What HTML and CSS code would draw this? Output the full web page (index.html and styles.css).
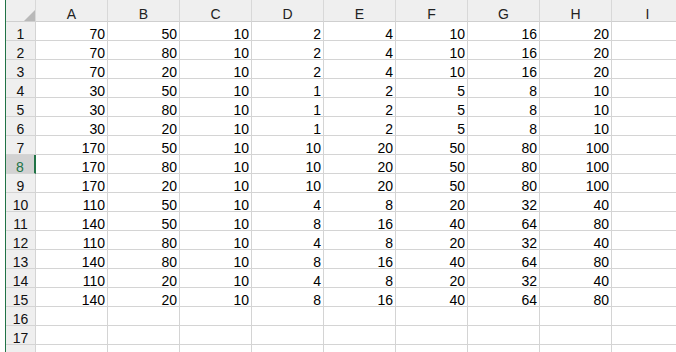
FILE: index.html
```html
<!DOCTYPE html>
<html>
<head>
<meta charset="utf-8">
<link rel="stylesheet" href="styles.css">
</head>
<body>
<div class="frame">
<table class="grid">
<thead>
<tr>
<th class="corner"><svg class="tri" width="11" height="11" viewBox="0 0 11 11"><polygon points="11,0 11,11 0,11" fill="#b9b9b9"/></svg></th>
<th class="ch">A</th><th class="ch">B</th><th class="ch">C</th><th class="ch">D</th><th class="ch">E</th><th class="ch">F</th><th class="ch">G</th><th class="ch">H</th><th class="ch">I</th>
</tr>
</thead>
<tbody>
<tr><th class="rh">1</th><td>70</td><td>50</td><td>10</td><td>2</td><td>4</td><td>10</td><td>16</td><td>20</td><td></td></tr>
<tr><th class="rh">2</th><td>70</td><td>80</td><td>10</td><td>2</td><td>4</td><td>10</td><td>16</td><td>20</td><td></td></tr>
<tr><th class="rh">3</th><td>70</td><td>20</td><td>10</td><td>2</td><td>4</td><td>10</td><td>16</td><td>20</td><td></td></tr>
<tr><th class="rh">4</th><td>30</td><td>50</td><td>10</td><td>1</td><td>2</td><td>5</td><td>8</td><td>10</td><td></td></tr>
<tr><th class="rh">5</th><td>30</td><td>80</td><td>10</td><td>1</td><td>2</td><td>5</td><td>8</td><td>10</td><td></td></tr>
<tr><th class="rh">6</th><td>30</td><td>20</td><td>10</td><td>1</td><td>2</td><td>5</td><td>8</td><td>10</td><td></td></tr>
<tr><th class="rh">7</th><td>170</td><td>50</td><td>10</td><td>10</td><td>20</td><td>50</td><td>80</td><td>100</td><td></td></tr>
<tr><th class="rh sel">8</th><td>170</td><td>80</td><td>10</td><td>10</td><td>20</td><td>50</td><td>80</td><td>100</td><td></td></tr>
<tr><th class="rh">9</th><td>170</td><td>20</td><td>10</td><td>10</td><td>20</td><td>50</td><td>80</td><td>100</td><td></td></tr>
<tr><th class="rh">10</th><td>110</td><td>50</td><td>10</td><td>4</td><td>8</td><td>20</td><td>32</td><td>40</td><td></td></tr>
<tr><th class="rh">11</th><td>140</td><td>50</td><td>10</td><td>8</td><td>16</td><td>40</td><td>64</td><td>80</td><td></td></tr>
<tr><th class="rh">12</th><td>110</td><td>80</td><td>10</td><td>4</td><td>8</td><td>20</td><td>32</td><td>40</td><td></td></tr>
<tr><th class="rh">13</th><td>140</td><td>80</td><td>10</td><td>8</td><td>16</td><td>40</td><td>64</td><td>80</td><td></td></tr>
<tr><th class="rh">14</th><td>110</td><td>20</td><td>10</td><td>4</td><td>8</td><td>20</td><td>32</td><td>40</td><td></td></tr>
<tr><th class="rh">15</th><td>140</td><td>20</td><td>10</td><td>8</td><td>16</td><td>40</td><td>64</td><td>80</td><td></td></tr>
<tr><th class="rh">16</th><td></td><td></td><td></td><td></td><td></td><td></td><td></td><td></td><td></td></tr>
<tr><th class="rh">17</th><td></td><td></td><td></td><td></td><td></td><td></td><td></td><td></td><td></td></tr>
<tr><th class="rh">18</th><td></td><td></td><td></td><td></td><td></td><td></td><td></td><td></td><td></td></tr>
</tbody>
</table>
</div>
</body>
</html>
```

FILE: styles.css
```css
html, body {
  margin: 0;
  padding: 0;
  background: #ffffff;
  overflow: hidden;
}

body {
  width: 676px;
  height: 352px;
  font-family: "Liberation Sans", Arial, sans-serif;
  color: #000000;
}

.frame {
  margin-left: 5px;
  border-left: 1px solid #217346;
  height: 352px;
  overflow: hidden;
}

.grid {
  border-collapse: separate;
  border-spacing: 0;
  table-layout: fixed;
  width: 678px;
}

.grid th,
.grid td {
  box-sizing: border-box;
  padding: 0;
  margin: 0;
  overflow: hidden;
  white-space: nowrap;
}

.corner,
.ch {
  height: 22px;
  background: #efefef;
  border-right: 1px solid #d8d8d8;
  border-bottom: 1px solid #cfcfcf;
  font-weight: normal;
}

.corner {
  width: 30px;
  text-align: right;
  vertical-align: bottom;
  padding: 0 2px 2px 0;
  line-height: 0;
}

.tri {
  display: inline-block;
}

.ch {
  width: 72px;
  font-size: 14px;
  line-height: 13px;
  color: #222222;
  text-align: center;
  vertical-align: bottom;
  padding-bottom: 2px;
}

.rh {
  width: 30px;
  height: 19px;
  background: #efefef;
  border-right: 1px solid #d4d4d4;
  border-bottom: 1px solid #d4d4d4;
  font-weight: normal;
  font-size: 14px;
  line-height: 12px;
  text-align: center;
  vertical-align: bottom;
  color: #111111;
}

.rh.sel {
  background: #d2d2d2;
  color: #217346;
  border-right: 2px solid #217346;
}

.grid td {
  width: 72px;
  height: 19px;
  border-right: 1px solid #d4d4d4;
  border-bottom: 1px solid #d4d4d4;
  font-size: 14px;
  line-height: 12px;
  text-align: right;
  vertical-align: bottom;
  padding-right: 2px;
}
```
